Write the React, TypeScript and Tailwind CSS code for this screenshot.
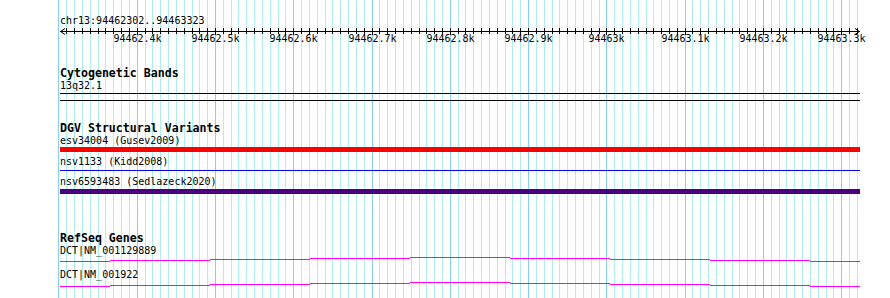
import React from "react";

const START = 94462302;
const PX = 800 / 1022;
const xOf = (bp: number) => 60 + (bp - START) * PX;

const gridBps: number[] = [];
for (let bp = 94462300; bp <= 94463320; bp += 10) gridBps.push(bp);

const majors = [
  { bp: 94462400, label: "94462.4k" },
  { bp: 94462500, label: "94462.5k" },
  { bp: 94462600, label: "94462.6k" },
  { bp: 94462700, label: "94462.7k" },
  { bp: 94462800, label: "94462.8k" },
  { bp: 94462900, label: "94462.9k" },
  { bp: 94463000, label: "94463k" },
  { bp: 94463100, label: "94463.1k" },
  { bp: 94463200, label: "94463.2k" },
  { bp: 94463300, label: "94463.3k" },
];

const segs = [
  { x0: 0, x1: 50, y: 4 },
  { x0: 50, x1: 150, y: 3 },
  { x0: 150, x1: 250, y: 2 },
  { x0: 250, x1: 350, y: 1 },
  { x0: 350, x1: 450, y: 0 },
  { x0: 450, x1: 550, y: 1 },
  { x0: 550, x1: 650, y: 2 },
  { x0: 650, x1: 750, y: 3 },
  { x0: 750, x1: 800, y: 4 },
];

function Intron() {
  return (
    <svg width={800} height={5} className="block" shapeRendering="crispEdges">
      {segs.map((s, i) => (
        <rect key={i} x={s.x0} y={s.y} width={s.x1 - s.x0} height={1} fill="#ff00ff" />
      ))}
    </svg>
  );
}

function Label({ children }: { children: React.ReactNode }) {
  return <div className="h-[10px] text-[10px] leading-[8.4px] whitespace-pre text-black">{children}</div>;
}

function Title({ children, mt }: { children: React.ReactNode; mt: string }) {
  return (
    <div className={`${mt} h-[12px] text-[11.6px] leading-[10.2px] font-bold whitespace-pre text-black`}>
      {children}
    </div>
  );
}

export default function App() {
  return (
    <div className="relative w-[890px] h-[298px] overflow-hidden bg-white font-['DejaVu_Sans_Mono',monospace]">
      <svg
        width={890}
        height={298}
        className="absolute left-0 top-0 pointer-events-none"
        shapeRendering="crispEdges"
      >
        {gridBps.map((bp) => {
          const x = Math.round(xOf(bp)) + 0.5;
          const major = bp % 100 === 0;
          return (
            <line
              key={bp}
              x1={x}
              x2={x}
              y1={0}
              y2={298}
              stroke={major ? "#87cefa" : "#afeeee"}
              strokeWidth={1}
            />
          );
        })}
      </svg>

      <div className="relative flex flex-col pl-[60px] w-[860px]">
        {/* Ruler */}
        <div className="mt-[17px]">
          <Label>chr13:94462302..94463323</Label>
        </div>
        <svg width={800} height={8} className="block" shapeRendering="crispEdges">
          <line x1={0} x2={800} y1={4.5} y2={4.5} stroke="#000" strokeWidth={1} />
          <polyline points="5,1.5 0.5,4.5 5,7.5" fill="none" stroke="#000" strokeWidth={1} shapeRendering="auto" />
          <polyline points="795,1.5 799.5,4.5 795,7.5" fill="none" stroke="#000" strokeWidth={1} shapeRendering="auto" />
          {gridBps
            .filter((bp) => xOf(bp) > 61)
            .map((bp) => {
              const x = Math.round(xOf(bp)) - 60 + 0.5;
              const major = bp % 100 === 0;
              return <line key={bp} x1={x} x2={x} y1={1} y2={major ? 8 : 7} stroke="#000" strokeWidth={1} />;
            })}
        </svg>
        <div className="relative h-[10px] w-[800px]">
          {majors.map((m) => (
            <span
              key={m.bp}
              className="absolute top-0 -translate-x-1/2 text-[10px] leading-[8.4px] whitespace-pre text-black"
              style={{ left: Math.round(xOf(m.bp)) - 60 + 0.5 }}
            >
              {m.label}
            </span>
          ))}
        </div>

        {/* Cytogenetic Bands */}
        <Title mt="mt-[23px]">Cytogenetic Bands</Title>
        <div className="mt-[2px]">
          <Label>13q32.1</Label>
        </div>
        <div className="mt-[1px] h-[8px] w-[800px] border-y border-black" />

        {/* DGV */}
        <Title mt="mt-[22px]">DGV Structural Variants</Title>
        <div className="mt-[2px]">
          <Label>esv34004 (Gusev2009)</Label>
        </div>
        <div className="h-[5px] w-[800px] bg-[#ff0000]" />
        <div className="mt-[6px]">
          <Label>nsv1133 (Kidd2008)</Label>
        </div>
        <div className="mt-[2px] h-[1px] w-[800px] bg-[#0000ff]" />
        <div className="mt-[7px]">
          <Label>nsv6593483 (Sedlazeck2020)</Label>
        </div>
        <div className="mt-[1px] h-[5px] w-[800px] bg-[#4b0082]" />

        {/* RefSeq */}
        <Title mt="mt-[39px]">RefSeq Genes</Title>
        <div className="mt-[2px]">
          <Label>DCT|NM_001129889</Label>
        </div>
        <Intron />
        <div className="mt-[9px]">
          <Label>DCT|NM_001922</Label>
        </div>
        <div className="mt-[1px]">
          <Intron />
        </div>
      </div>
    </div>
  );
}
